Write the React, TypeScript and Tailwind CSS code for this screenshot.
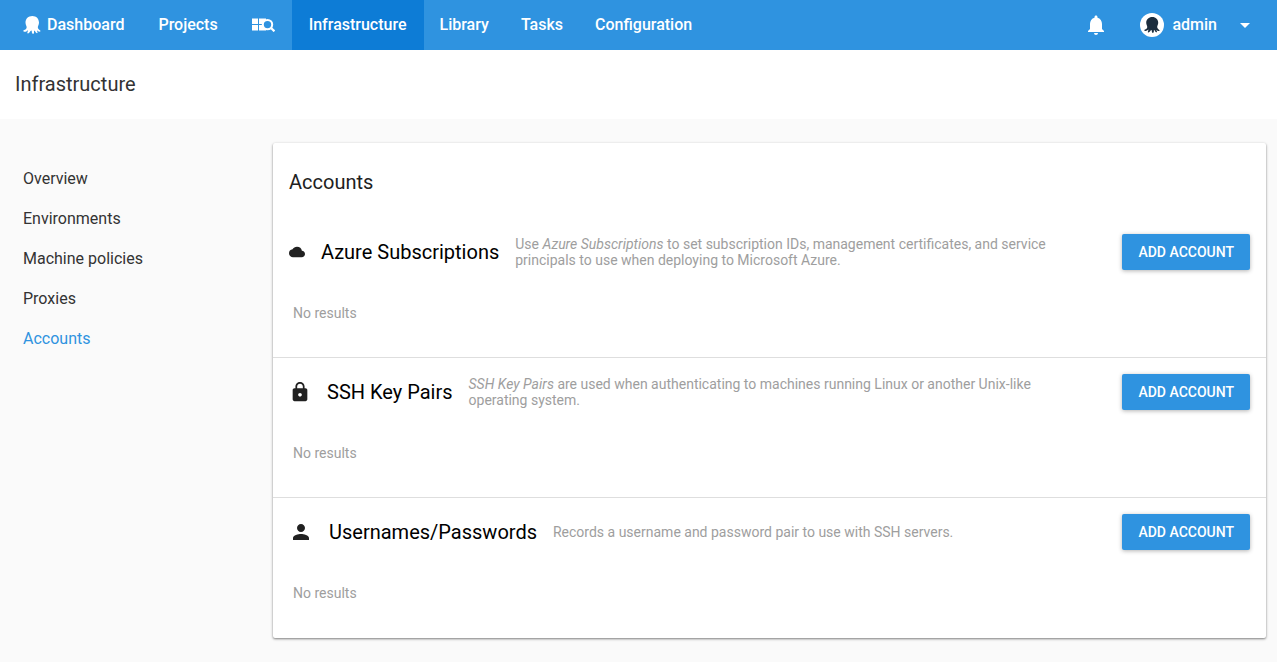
import type { ReactNode } from "react";
import { MdArrowDropDown, MdCloud, MdLock, MdNotifications, MdPerson } from "react-icons/md";

function OctopusIcon({ className }: { className: string }) {
  return (
    <svg viewBox="0 0 52 54" className={className} fill="currentColor" aria-hidden="true">
      <path d="M27 0C15 0 6.500 8.500 6.500 19.500C6.500 26 10 29.500 10 34C10 39 6 41 1 43C-1 44.500 0 47.500 4 47.500C8 47.500 11 45 13.500 42.500C14.500 44 13 47.500 12 49.500C11 52.500 14.500 53 17 51C20 48.500 21 44.500 23.500 43.500C26 44 25 49 26.500 52C28 54.500 31.500 54 32 51C32.500 48 31.500 45 33 43.500C35.500 44.500 36 48 38.500 50.500C41 52.500 43.500 51.500 42.500 48.500C42 46.500 40.500 44.500 41.500 43.500C43.500 44.500 45 47 48.500 47.500C51.500 47.500 52.500 45 50.500 43.500C46.500 41 43.500 38 43.500 34C43.500 29.500 47 26 47 19.500C47 8.500 39 0 27 0Z" />
    </svg>
  );
}

function GridSearchIcon() {
  return (
    <svg viewBox="0 0 23 14" className="h-3.5 w-[23px]" aria-hidden="true">
      <path fill="#fff" d="M0 0.500h6v5.500H0zM7 0.500h7v5.500H7zM0 7h6v5.500H0zM7 7h7v5.500H7z" />
      <circle cx="15.500" cy="6.600" r="4.700" fill="#2f93e0" stroke="#fff" strokeWidth="2" />
      <path d="M18.800 9.800l3.600 3.500" stroke="#fff" strokeWidth="2.200" />
    </svg>
  );
}

const navLinks = ["Infrastructure", "Library", "Tasks", "Configuration"];
const sideLinks = ["Overview", "Environments", "Machine policies", "Proxies", "Accounts"];

const sections: { title: string; icon: ReactNode; text: ReactNode }[] = [
  {
    title: "Azure Subscriptions",
    icon: <MdCloud className="size-4 shrink-0" />,
    text: (
      <>
        Use <em>Azure Subscriptions</em> to set subscription IDs, management certificates, and service principals to
        use when deploying to Microsoft Azure.
      </>
    ),
  },
  {
    title: "SSH Key Pairs",
    icon: <MdLock className="size-[22px] shrink-0" />,
    text: (
      <>
        <em>SSH Key Pairs</em> are used when authenticating to machines running Linux or another Unix-like operating
        system.
      </>
    ),
  },
  {
    title: "Usernames/Passwords",
    icon: <MdPerson className="size-6 shrink-0" />,
    text: "Records a username and password pair to use with SSH servers.",
  },
];

export default function App() {
  return (
    <div className="min-h-screen bg-[#fafafa] font-['Roboto',sans-serif] text-[#333]">
      <header className="flex h-[50px] items-stretch bg-[#2f93e0] pr-5 pl-1.5 font-medium text-white">
        <nav className="flex items-stretch" aria-label="Main">
          <a href="#dashboard" className="flex items-center gap-1.5 px-[17px]">
            <OctopusIcon className="size-[18px]" />
            Dashboard
          </a>
          <a href="#projects" className="flex items-center px-[17px]">
            Projects
          </a>
          <a href="#search" className="flex items-center px-[17px]" aria-label="Search">
            <GridSearchIcon />
          </a>
          {navLinks.map((label) => (
            <a
              key={label}
              href={"#" + label.toLowerCase()}
              className={`flex items-center ${label === "Infrastructure" ? "bg-[#0d7cd6] px-[17px]" : "px-4"}`}
            >
              {label}
            </a>
          ))}
        </nav>
        <div className="ml-auto flex items-center gap-8">
          <button type="button" aria-label="Notifications">
            <MdNotifications className="size-6" />
          </button>
          <button type="button" className="flex items-center gap-2">
            <span className="flex size-6 items-center justify-center rounded-full bg-white">
              <OctopusIcon className="size-4 text-[#1b2d3e]" />
            </span>
            admin
            <MdArrowDropDown className="ml-2 size-6" />
          </button>
        </div>
      </header>

      <div className="bg-white px-[15px] py-5">
        <h1 className="text-xl leading-[29px]">Infrastructure</h1>
      </div>

      <div className="flex items-start pt-6 pr-[11px]">
        <nav className="w-[273px] shrink-0 pt-4 pl-[23px]" aria-label="Infrastructure">
          {sideLinks.map((label) => (
            <a
              key={label}
              href={"#" + label.toLowerCase().replace(" ", "-")}
              className={`block leading-10 ${label === "Accounts" ? "text-[#2f93e0]" : ""}`}
            >
              {label}
            </a>
          ))}
        </nav>

        <main className="min-w-0 flex-1 rounded-xs bg-white pb-px shadow-[0_1px_3px_rgba(0,0,0,0.3),0_1px_2px_rgba(0,0,0,0.25)]">
          <h2 className="px-4 pt-6 pb-[22px] text-xl leading-[30px] text-[#212121]">Accounts</h2>
          {sections.map(({ title, icon, text }, i) => (
            <section key={title} className={i > 0 ? "border-t border-[#dedede]" : ""}>
              <div className={`flex items-center gap-4 px-4 ${i > 0 ? "pt-4" : "pt-[15px]"}`}>
                <span className="text-[#212121]">{icon}</span>
                <h3 className="shrink-0 text-xl leading-6 text-black">{title}</h3>
                <p className="min-w-0 flex-1 pr-6 text-sm leading-4 text-[#9e9e9e]">{text}</p>
                <button
                  type="button"
                  className="h-9 shrink-0 rounded-xs bg-[#2f93e0] px-4 text-sm font-medium text-white uppercase shadow-[0_1px_4px_rgba(0,0,0,0.3)]"
                >
                  Add account
                </button>
              </div>
              <p className="px-5 pt-8 pb-[33px] text-sm leading-[22px] text-[#9e9e9e]">No results</p>
            </section>
          ))}
        </main>
      </div>
    </div>
  );
}
